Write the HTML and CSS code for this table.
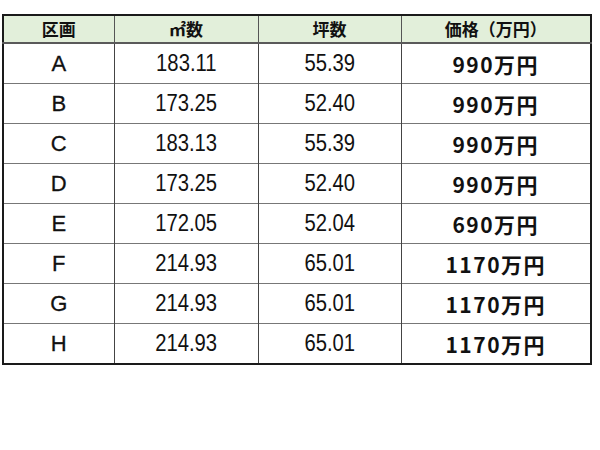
FILE: index.html
```html
<!DOCTYPE html>
<html lang="ja">
<head>
<meta charset="utf-8">
<link rel="stylesheet" href="styles.css">
</head>
<body>
<table class="lots">
  <colgroup>
    <col class="c1"><col class="c2"><col class="c3"><col class="c4">
  </colgroup>
  <thead>
    <tr><th>区画</th><th>㎡数</th><th>坪数</th><th>価格（万円）</th></tr>
  </thead>
  <tbody>
    <tr><td class="lot">A</td><td class="num"><span class="nar">183.11</span></td><td class="num"><span class="nar">55.39</span></td><td class="price">990万円</td></tr>
    <tr><td class="lot">B</td><td class="num"><span class="nar">173.25</span></td><td class="num"><span class="nar">52.40</span></td><td class="price">990万円</td></tr>
    <tr><td class="lot">C</td><td class="num"><span class="nar">183.13</span></td><td class="num"><span class="nar">55.39</span></td><td class="price">990万円</td></tr>
    <tr><td class="lot">D</td><td class="num"><span class="nar">173.25</span></td><td class="num"><span class="nar">52.40</span></td><td class="price">990万円</td></tr>
    <tr><td class="lot">E</td><td class="num"><span class="nar">172.05</span></td><td class="num"><span class="nar">52.04</span></td><td class="price">690万円</td></tr>
    <tr><td class="lot">F</td><td class="num"><span class="nar">214.93</span></td><td class="num"><span class="nar">65.01</span></td><td class="price">1170万円</td></tr>
    <tr><td class="lot">G</td><td class="num"><span class="nar">214.93</span></td><td class="num"><span class="nar">65.01</span></td><td class="price">1170万円</td></tr>
    <tr><td class="lot">H</td><td class="num"><span class="nar">214.93</span></td><td class="num"><span class="nar">65.01</span></td><td class="price">1170万円</td></tr>
  </tbody>
</table>
</body>
</html>
```
FILE: styles.css
```css
html, body {
  margin: 0;
  padding: 0;
  background: #fff;
}
body {
  padding: 14px 0 0 2px;
  font-family: "Liberation Sans", "Noto Sans CJK JP", sans-serif;
  color: #111;
}
.lots {
  border-collapse: collapse;
  table-layout: fixed;
  width: 590px;
  border: 2px solid #1a1a1a;
}
.c1 { width: 111px; }
.c2 { width: 144px; }
.c3 { width: 143px; }
.c4 { width: 190px; }
.lots th {
  height: 26px;
  padding: 0;
  background: #e2efda;
  font-family: "Noto Sans CJK JP", sans-serif;
  font-weight: 700;
  font-size: 17px;
  line-height: 26px;
  border-left: 1px solid #555;
  border-bottom: 2px solid #5a5a5a;
  text-align: center;
}
.lots td {
  height: 39px;
  padding: 0;
  text-align: center;
  border-left: 1px solid #444;
  border-top: 1px solid #777;
  vertical-align: middle;
}
.lot {
  font-size: 22px;
  -webkit-text-stroke: 0.3px #111;
}
.num {
  font-size: 23px;
}
.nar {
  display: inline-block;
  transform: scaleX(0.88);
}
.price {
  font-family: "Noto Sans CJK JP", sans-serif;
  font-weight: 700;
  font-size: 21px;
  letter-spacing: 1.5px;
}
```
